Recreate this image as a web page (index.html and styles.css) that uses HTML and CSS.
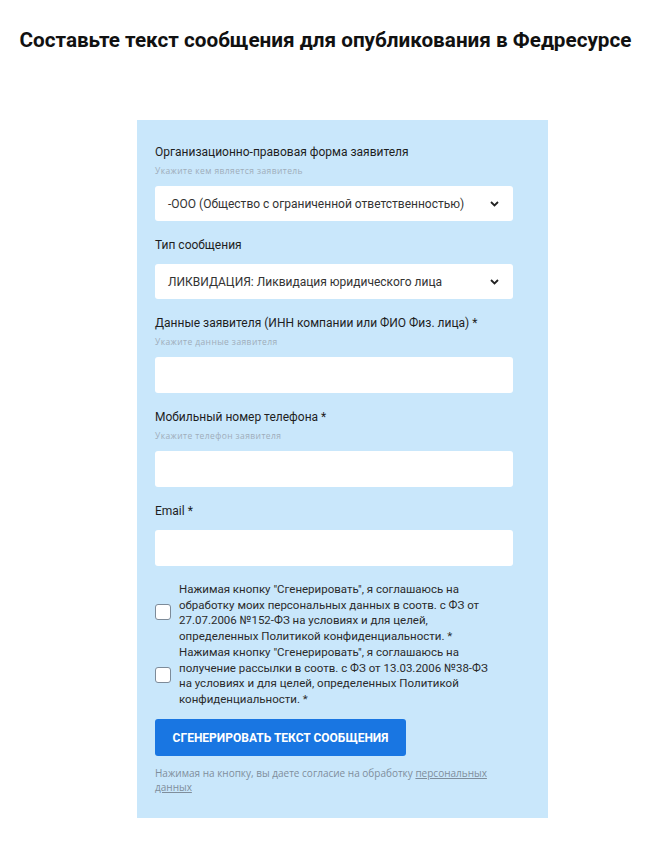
FILE: index.html
```html
<!DOCTYPE html>
<html lang="ru">
<head>
<meta charset="utf-8">
<title>Федресурс</title>
<link rel="stylesheet" href="styles.css">
</head>
<body>
<h1 class="title">Составьте текст сообщения для опубликования в Федресурсе</h1>
<form class="panel">
  <div class="field">
    <div class="label">Организационно-правовая форма заявителя</div>
    <div class="hint">Укажите кем является заявитель</div>
    <div class="select">
      <span>-ООО (Общество с ограниченной ответственностью)</span>
      <svg class="chev" width="9" height="6" viewBox="0 0 9 6"><path d="M1 1l3.5 3.5L8 1" fill="none" stroke="#222" stroke-width="1.8"/></svg>
    </div>
  </div>
  <div class="field">
    <div class="label nohint">Тип сообщения</div>
    <div class="select">
      <span>ЛИКВИДАЦИЯ: Ликвидация юридического лица</span>
      <svg class="chev" width="9" height="6" viewBox="0 0 9 6"><path d="M1 1l3.5 3.5L8 1" fill="none" stroke="#222" stroke-width="1.8"/></svg>
    </div>
  </div>
  <div class="field">
    <div class="label">Данные заявителя (ИНН компании или ФИО Физ. лица) *</div>
    <div class="hint">Укажите данные заявителя</div>
    <div class="input"></div>
  </div>
  <div class="field">
    <div class="label">Мобильный номер телефона *</div>
    <div class="hint">Укажите телефон заявителя</div>
    <div class="input"></div>
  </div>
  <div class="field">
    <div class="label nohint">Email *</div>
    <div class="input"></div>
  </div>
  <div class="checks">
    <label class="check">
      <span class="box"></span>
      <span class="check-text">Нажимая кнопку "Сгенерировать", я соглашаюсь на<br>обработку моих персональных данных в соотв. с ФЗ от<br>27.07.2006 №152-ФЗ на условиях и для целей,<br>определенных Политикой конфиденциальности. *</span>
    </label>
    <label class="check">
      <span class="box"></span>
      <span class="check-text">Нажимая кнопку "Сгенерировать", я соглашаюсь на<br>получение рассылки в соотв. с ФЗ от 13.03.2006 №38-ФЗ<br>на условиях и для целей, определенных Политикой<br>конфиденциальности. *</span>
    </label>
  </div>
  <div class="button">СГЕНЕРИРОВАТЬ ТЕКСТ СООБЩЕНИЯ</div>
  <p class="note">Нажимая на кнопку, вы даете согласие на обработку <span class="link">персональных</span><br><span class="link">данных</span></p>
</form>
</body>
</html>
```
FILE: styles.css
```css
* { box-sizing: border-box; }
body {
  margin: 0;
  background: #ffffff;
  font-family: Roboto, "Liberation Sans", sans-serif;
  color: #222;
}
.title {
  margin: 28px 0 0;
  font-size: 20.7px;
  line-height: 24px;
  font-weight: 700;
  text-align: center;
  color: #111;
}
.panel {
  display: flex;
  flex-direction: column;
  width: 411px;
  margin: 68px 0 0 137px;
  padding: 24px 35px 24px 18px;
  background: #c9e7fb;
}
.field {
  display: flex;
  flex-direction: column;
  margin-bottom: 16px;
}
.label {
  font-size: 12px;
  line-height: 16px;
  color: #1e1e1e;
}
.label.nohint { margin-bottom: 11px; }
.hint {
  margin: 5px 0 9px;
  font-family: "Open Sans", sans-serif;
  font-size: 8.5px;
  line-height: 12px;
  letter-spacing: 0.4px;
  color: #9fadba;
}
.select, .input {
  height: 35px;
  background: #fff;
  border-radius: 3px;
}
.input { height: 36px; }
.select {
  display: flex;
  align-items: center;
  justify-content: space-between;
  padding: 0 14px 0 13px;
  font-size: 12px;
  color: #333;
}
.chev { display: block; }
.checks {
  display: flex;
  flex-direction: column;
  gap: 1px;
}
.check {
  display: flex;
  align-items: center;
  gap: 8px;
}
.box {
  flex: none;
  width: 16px;
  height: 16px;
  margin-bottom: 3px;
  border: 1.5px solid #7d8b99;
  border-radius: 3px;
  background: #fff;
}
.check-text {
  font-size: 11.5px;
  line-height: 15.5px;
  color: #2b2b2b;
  white-space: nowrap;
}
.button {
  align-self: flex-start;
  margin-top: 12px;
  width: 251px;
  height: 37px;
  display: flex;
  align-items: center;
  justify-content: center;
  background: #1976e2;
  border-radius: 3px;
  color: #fff;
  font-size: 12px;
  font-weight: 700;
}
.note {
  margin: 10px 0 0;
  font-family: "Open Sans", sans-serif;
  font-size: 10px;
  line-height: 14px;
  color: #7f8e9c;
}
.link { text-decoration: underline; }
```
